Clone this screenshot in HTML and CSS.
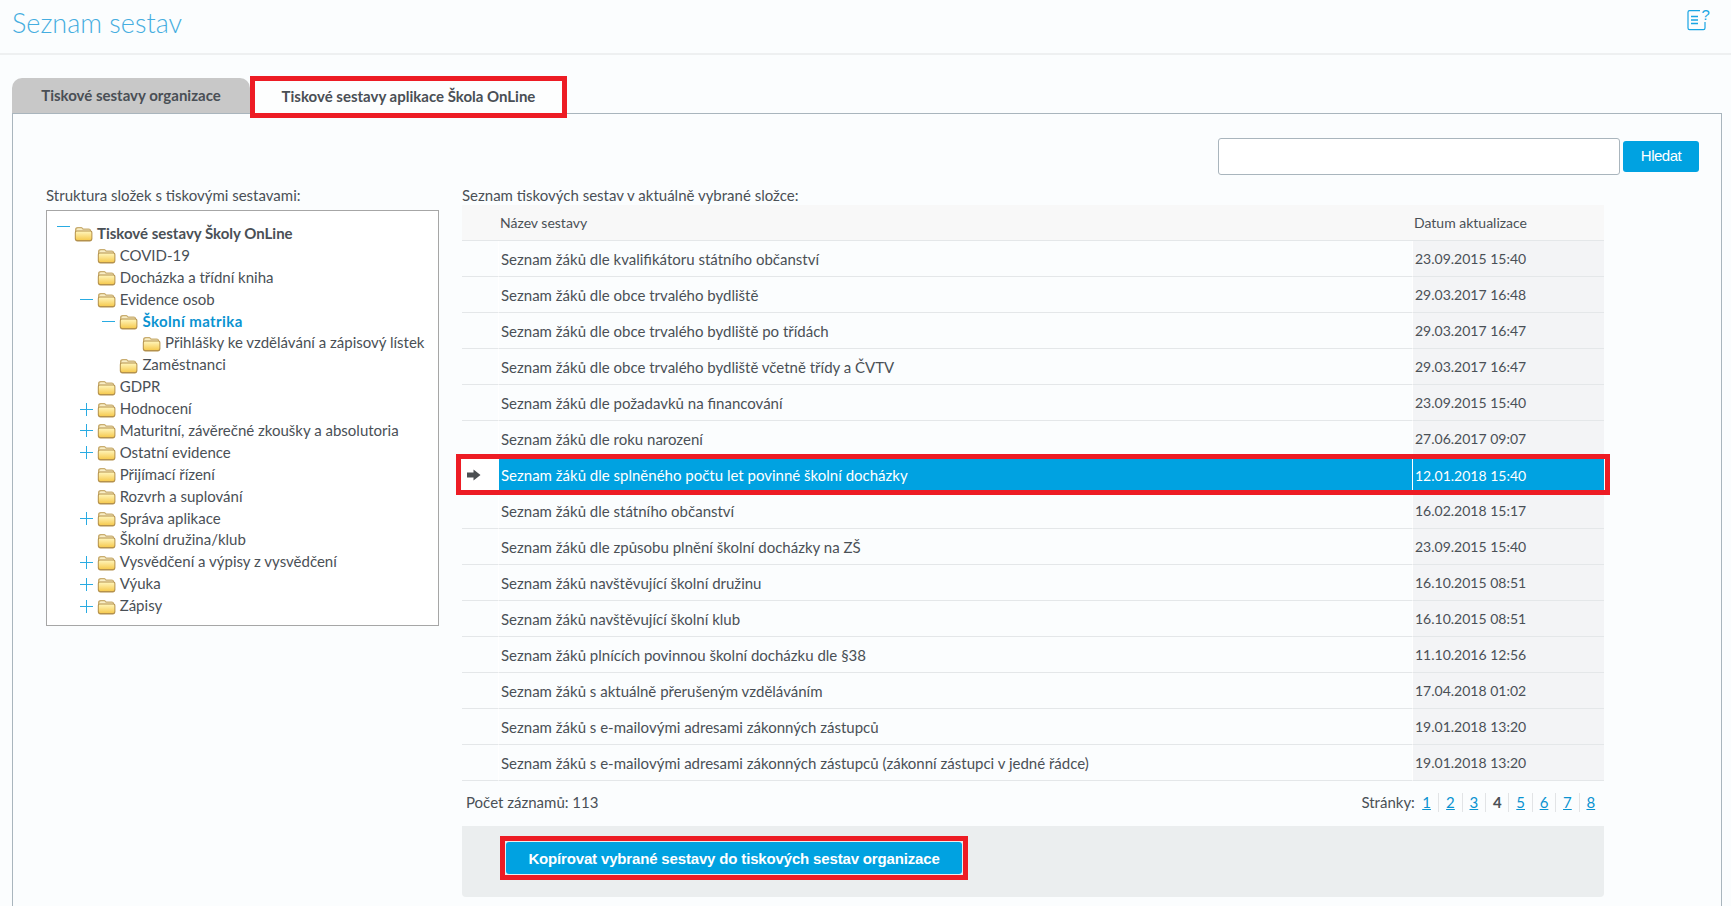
FILE: index.html
```html
<!DOCTYPE html>
<html lang="cs">
<head>
  <meta charset="UTF-8" />
  <title>Seznam sestav</title>
  <link rel="stylesheet" href="styles.css">
</head>
<body>
  <svg class="defs" width="0" height="0">
    <defs>
      <linearGradient id="folderFill" x1="0" y1="0" x2="0" y2="1">
        <stop offset="0" stop-color="#fff4b8"/>
        <stop offset="1" stop-color="#f6cb52"/>
      </linearGradient>
      <symbol id="folder" viewBox="0 0 19 17">
        <path d="M1 12V4.6C1 3 2 2 3.6 2H6.6C8 2 8.8 2.6 9.4 3.6H14.6C16.2 3.6 17.2 4.6 17.2 6V12Z" fill="#c9ad70"/>
        <path d="M2.4 5.4C2.4 4 3 3.2 4 3.2H6.6C7.8 3.2 8.4 3.8 8.8 4.8H14.8C15.6 4.8 16 5.2 16 6H2.4Z" fill="#f8edc4"/>
        <path d="M0.8 13.6V7.8C0.8 6.4 1.7 5.6 3 5.6H16.1C17.5 5.6 18.4 6.4 18.4 7.8V13.6C18.4 15.4 17.4 16.5 15.7 16.5H3.5C1.8 16.5 0.8 15.4 0.8 13.6Z" fill="#b4914c"/>
        <path d="M1.8 8C1.8 7.1 2.4 6.6 3.2 6.6H16C16.8 6.6 17.4 7.1 17.4 8V13.2C17.4 14.3 16.7 15 15.6 15H3.6C2.5 15 1.8 14.3 1.8 13.2Z" fill="url(#folderFill)"/>
      </symbol>
    </defs>
  </svg>

  <header class="page-head">
    <h1>Seznam sestav</h1>
    <svg class="help-icon" width="24" height="24" viewBox="0 0 24 24" fill="none" stroke="#19a5e3" stroke-width="1.2">
      <path d="M14 3.6H3.6C2.6 3.6 2 4.2 2 5.2V21C2 22 2.6 22.6 3.6 22.6H17.4C18.4 22.6 19 22 19 21V15"/>
      <path d="M5 9.5H12M5 13H12M5 16.5H12" stroke-width="1.5"/>
      <text x="15.5" y="13" class="help-mark">?</text>
    </svg>
  </header>

  <nav class="tabs">
    <a class="tab">Tiskové sestavy organizace</a>
    <a class="tab tab-active">Tiskové sestavy aplikace Škola OnLine</a>
  </nav>

  <main class="panel">
    <div class="search">
      <input type="text" class="search-input">
      <button class="search-btn">Hledat</button>
    </div>

    <div class="columns">
      <section class="col-tree">
        <div class="label">Struktura složek s tiskovými sestavami:</div>
        <ul class="tree">
          <li class="node root"><span class="toggle minus"></span><svg class="folder"><use href="#folder"/></svg><span>Tiskové sestavy Školy OnLine</span></li>
          <li class="node lv1"><span class="toggle"></span><svg class="folder"><use href="#folder"/></svg><span>COVID-19</span></li>
          <li class="node lv1"><span class="toggle"></span><svg class="folder"><use href="#folder"/></svg><span>Docházka a třídní kniha</span></li>
          <li class="node lv1"><span class="toggle minus"></span><svg class="folder"><use href="#folder"/></svg><span>Evidence osob</span></li>
          <li class="node lv2 current"><span class="toggle minus"></span><svg class="folder"><use href="#folder"/></svg><span>Školní matrika</span></li>
          <li class="node lv3"><span class="toggle"></span><svg class="folder"><use href="#folder"/></svg><span>Přihlášky ke vzdělávání a zápisový lístek</span></li>
          <li class="node lv2"><span class="toggle"></span><svg class="folder"><use href="#folder"/></svg><span>Zaměstnanci</span></li>
          <li class="node lv1"><span class="toggle"></span><svg class="folder"><use href="#folder"/></svg><span>GDPR</span></li>
          <li class="node lv1"><span class="toggle plus"></span><svg class="folder"><use href="#folder"/></svg><span>Hodnocení</span></li>
          <li class="node lv1"><span class="toggle plus"></span><svg class="folder"><use href="#folder"/></svg><span>Maturitní, závěrečné zkoušky a absolutoria</span></li>
          <li class="node lv1"><span class="toggle plus"></span><svg class="folder"><use href="#folder"/></svg><span>Ostatní evidence</span></li>
          <li class="node lv1"><span class="toggle"></span><svg class="folder"><use href="#folder"/></svg><span>Přijímací řízení</span></li>
          <li class="node lv1"><span class="toggle"></span><svg class="folder"><use href="#folder"/></svg><span>Rozvrh a suplování</span></li>
          <li class="node lv1"><span class="toggle plus"></span><svg class="folder"><use href="#folder"/></svg><span>Správa aplikace</span></li>
          <li class="node lv1"><span class="toggle"></span><svg class="folder"><use href="#folder"/></svg><span>Školní družina/klub</span></li>
          <li class="node lv1"><span class="toggle plus"></span><svg class="folder"><use href="#folder"/></svg><span>Vysvědčení a výpisy z vysvědčení</span></li>
          <li class="node lv1"><span class="toggle plus"></span><svg class="folder"><use href="#folder"/></svg><span>Výuka</span></li>
          <li class="node lv1"><span class="toggle plus"></span><svg class="folder"><use href="#folder"/></svg><span>Zápisy</span></li>
        </ul>
      </section>

      <section class="col-list">
        <div class="label">Seznam tiskových sestav v aktuálně vybrané složce:</div>
        <table class="reports">
          <thead>
            <tr><th class="mark"></th><th>Název sestavy</th><th class="date">Datum aktualizace</th></tr>
          </thead>
          <tbody>
            <tr><td class="mark"></td><td>Seznam žáků dle kvalifikátoru státního občanství</td><td class="date">23.09.2015 15:40</td></tr>
            <tr><td class="mark"></td><td>Seznam žáků dle obce trvalého bydliště</td><td class="date">29.03.2017 16:48</td></tr>
            <tr><td class="mark"></td><td>Seznam žáků dle obce trvalého bydliště po třídách</td><td class="date">29.03.2017 16:47</td></tr>
            <tr><td class="mark"></td><td>Seznam žáků dle obce trvalého bydliště včetně třídy a ČVTV</td><td class="date">29.03.2017 16:47</td></tr>
            <tr><td class="mark"></td><td>Seznam žáků dle požadavků na financování</td><td class="date">23.09.2015 15:40</td></tr>
            <tr><td class="mark"></td><td>Seznam žáků dle roku narození</td><td class="date">27.06.2017 09:07</td></tr>
            <tr class="selected">
              <td class="mark"><svg width="14" height="12" viewBox="0 0 14 12"><path d="M0 3.5H6.5V0.5L13.5 6L6.5 11.5V8.5H0Z" fill="#4b4f52"/></svg></td>
              <td>Seznam žáků dle splněného počtu let povinné školní docházky</td>
              <td class="date">12.01.2018 15:40</td>
            </tr>
            <tr><td class="mark"></td><td>Seznam žáků dle státního občanství</td><td class="date">16.02.2018 15:17</td></tr>
            <tr><td class="mark"></td><td>Seznam žáků dle způsobu plnění školní docházky na ZŠ</td><td class="date">23.09.2015 15:40</td></tr>
            <tr><td class="mark"></td><td>Seznam žáků navštěvující školní družinu</td><td class="date">16.10.2015 08:51</td></tr>
            <tr><td class="mark"></td><td>Seznam žáků navštěvující školní klub</td><td class="date">16.10.2015 08:51</td></tr>
            <tr><td class="mark"></td><td>Seznam žáků plnících povinnou školní docházku dle §38</td><td class="date">11.10.2016 12:56</td></tr>
            <tr><td class="mark"></td><td>Seznam žáků s aktuálně přerušeným vzděláváním</td><td class="date">17.04.2018 01:02</td></tr>
            <tr><td class="mark"></td><td>Seznam žáků s e-mailovými adresami zákonných zástupců</td><td class="date">19.01.2018 13:20</td></tr>
            <tr><td class="mark"></td><td>Seznam žáků s e-mailovými adresami zákonných zástupců (zákonní zástupci v jedné řádce)</td><td class="date">19.01.2018 13:20</td></tr>
          </tbody>
        </table>

        <div class="list-foot">
          <span class="count">Počet záznamů: 113</span>
          <div class="pager">
            <span class="pager-label">Stránky:</span>
            <a>1</a><a>2</a><a>3</a><b>4</b><a>5</a><a>6</a><a>7</a><a>8</a>
          </div>
        </div>

        <div class="actions">
          <div class="action-frame">
            <button class="copy-btn">Kopírovat vybrané sestavy do tiskových sestav organizace</button>
          </div>
        </div>
      </section>
    </div>
  </main>
</body>
</html>
```

FILE: styles.css
```css
html, body {
  height: 100%;
}
body {
  margin: 0;
  overflow: hidden;
  background: #fbfdfe;
  color: #4a5056;
  font-family: 'Lato', 'Noto Sans', sans-serif;
  font-size: 15px;
}
.defs {
  position: absolute;
}
.page-head {
  height: 53px;
  border-bottom: 2px solid #eef0f1;
  padding: 0 21px 0 12px;
  display: flex;
  justify-content: space-between;
  align-items: flex-start;
}
h1 {
  margin: 0;
  font-size: 27px;
  line-height: 45px;
  font-weight: 300;
  color: #45ade0;
}
.help-icon {
  margin: 7px 0 0;
}
.help-mark {
  font-family: 'Liberation Sans', sans-serif;
  font-size: 15px;
  fill: #19a5e3;
  stroke: none;
}

/* tabs */
.tabs {
  margin: 21px 0 0 12px;
  display: flex;
  align-items: flex-end;
}
.tab {
  width: 238px;
  height: 35px;
  box-sizing: border-box;
  background: #c8c8c8;
  border-radius: 10px 10px 0 0;
  font-weight: 700;
  line-height: 35px;
  text-align: center;
  color: #4a4f55;
}
.tab-active {
  position: relative;
  width: 317px;
  height: 42px;
  margin-bottom: -5px;
  background: #fdfefe;
  border: 5px solid #ed1c24;
  border-radius: 0;
  line-height: 30px;
}

.panel {
  margin: 0 9px 0 12px;
  border: 1px solid #a9b5bd;
  padding: 24px 22px 100px 33px;
}
.search {
  display: flex;
  justify-content: flex-end;
  align-items: center;
  gap: 3px;
}
.search-input {
  width: 402px;
  height: 37px;
  box-sizing: border-box;
  background: #fff;
  border: 1px solid #a9b5bd;
  border-radius: 3px;
}
.search-btn {
  width: 76px;
  height: 31px;
  padding: 0 0 2px;
  background: #00a2e1;
  border: none;
  border-radius: 3px;
  color: #fff;
  font-family: 'Liberation Sans', sans-serif;
  font-size: 15px;
  letter-spacing: -0.5px;
}

.columns {
  margin-top: 11px;
  display: flex;
  gap: 23px;
}
.col-tree {
  width: 393px;
}
.col-list {
  width: 1142px;
}
.label {
  height: 19px;
  line-height: 19px;
}

/* folder tree */
.tree {
  list-style: none;
  margin: 5px 0 0;
  padding: 12px 0 8px;
  border: 1px solid #a6a6a6;
  background: #fff;
}
.node {
  height: 21.9px;
  line-height: 21.9px;
  display: flex;
  align-items: center;
  white-space: nowrap;
}
.root { padding-left: 10px; font-weight: 700; }
.lv1 { padding-left: 32.7px; }
.lv2 { padding-left: 55.4px; }
.lv3 { padding-left: 78.1px; }
.current {
  color: #0a93d1;
  font-weight: 700;
  letter-spacing: 0.4px;
}
.toggle {
  position: relative;
  width: 13px;
  height: 13px;
  margin-right: 4px;
  flex: none;
}
.minus::before, .plus::before {
  content: "";
  position: absolute;
  left: 0;
  top: 6px;
  width: 13px;
  height: 1px;
  background: #29abe2;
}
.plus::after {
  content: "";
  position: absolute;
  left: 6px;
  top: 0;
  width: 1px;
  height: 13px;
  background: #29abe2;
}
.root .minus::before {
  top: -1px;
}
.folder {
  width: 19px;
  height: 17px;
  margin-right: 4px;
  flex: none;
}

/* report list */
.reports {
  width: 100%;
  table-layout: fixed;
  border-collapse: separate;
  border-spacing: 0;
}
.reports th, .reports td {
  height: 36px;
  box-sizing: border-box;
  padding: 0 2px;
  border-bottom: 1px solid #e4e7e9;
  text-align: left;
  white-space: nowrap;
}
.reports th {
  background: #f8f8f8;
  font-size: 14px;
  font-weight: 400;
}
.reports .mark {
  width: 36px;
  padding: 0;
}
.reports .date {
  width: 192px;
}
.reports td.date {
  background: #f3f4f6;
  border-left: 1px solid #fff;
  font-size: 14px;
}
.reports td:nth-child(2) {
  border-left: 1px solid #fff;
}
.selected td {
  border-bottom: none;
  background: #00a2e1;
  color: #fff;
}
.reports .selected td.mark {
  background: #fff;
  padding: 0 0 0 5px;
}
.reports .selected td.date {
  position: relative;
  background: #00a2e1;
}
/* red frame around the whole row */
.selected td.date::after {
  content: "";
  position: absolute;
  left: -957px;
  top: -3px;
  width: 1144px;
  height: 31px;
  border: 5px solid #ed1c24;
}
.list-foot {
  height: 45px;
  box-sizing: border-box;
  padding: 0 2px 3px 4px;
  display: flex;
  justify-content: space-between;
  align-items: center;
}
.pager {
  display: flex;
  align-items: center;
}
.pager a, .pager b {
  width: 23.4px;
  height: 19px;
  line-height: 19px;
  text-align: center;
  border-left: 1px solid #e2e4e6;
  box-sizing: border-box;
}
.pager-label + a {
  border-left: none;
}
.pager a {
  color: #0a93d1;
  text-decoration: underline;
}
.actions {
  height: 71px;
  box-sizing: border-box;
  padding: 10px 0 0 38px;
  background: #ebeeef;
  border-radius: 0 0 4px 4px;
}
.action-frame {
  display: inline-block;
  border: 5px solid #ed1c24;
  padding: 1px;
  background: #e8eef1;
}
.copy-btn {
  display: block;
  width: 456px;
  height: 32px;
  background: #00a2e1;
  border: none;
  border-radius: 3px;
  color: #fff;
  font-family: 'Liberation Sans', sans-serif;
  font-size: 15px;
  font-weight: 700;
  letter-spacing: -0.16px;
}
```
